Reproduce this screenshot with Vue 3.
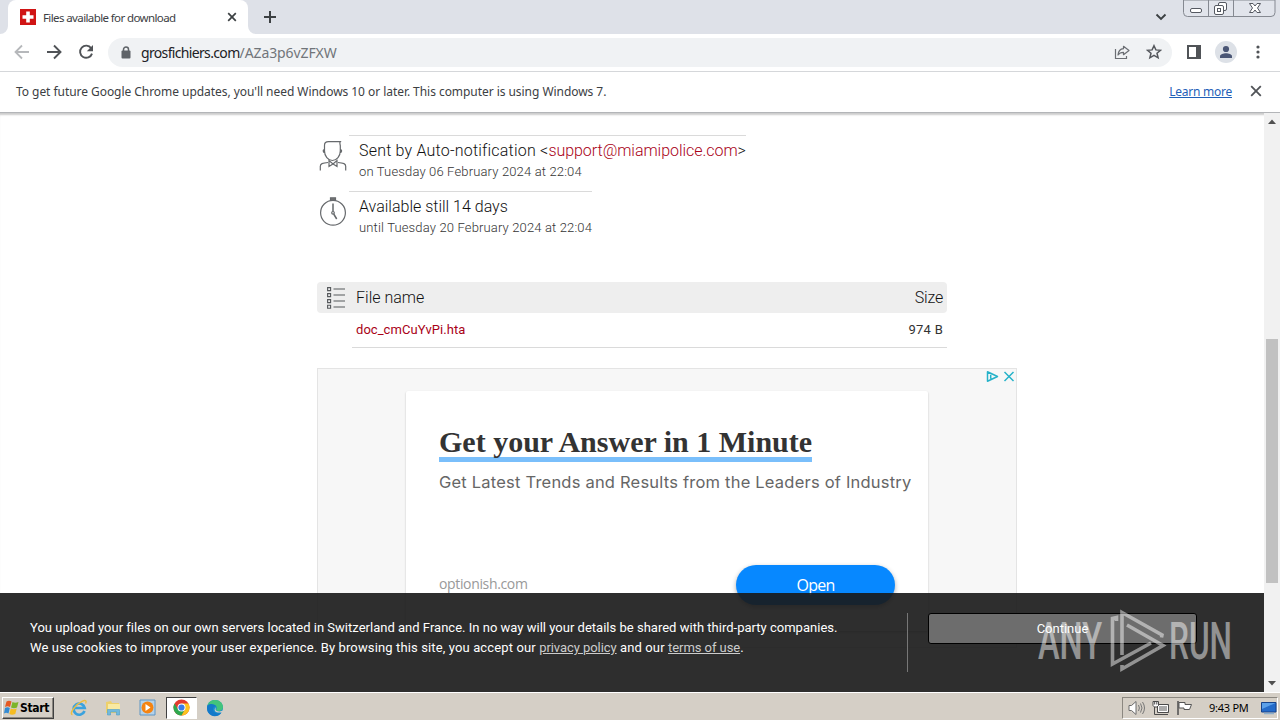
<script setup>
const files = [{ name: 'doc_cmCuYvPi.hta', size: '974 B' }]
</script>

<template>
  <div class="screen">
    <header class="tabs">
      <div class="tab">
        <svg class="favicon" width="16" height="16" viewBox="0 0 16 16"><path fill="#d01414" d="M0 0h16v16H0z" /><path fill="#fff" d="M6.200 2.500h3.600v3.700H13.500v3.600H9.800v3.700H6.200V9.800H2.500V6.200h3.700z" /></svg>
        <span class="tab-title">Files available for download</span>
        <svg class="tab-x" width="10" height="10" viewBox="0 0 10 10"><path d="M1.200 1.200l7.600 7.600M8.800 1.200L1.200 8.800" stroke="#3c4043" stroke-width="1.700" /></svg>
        <svg class="flare left" width="8" height="8" viewBox="0 0 8 8"><path fill="#fff" d="M8 0v8H0a8 8 0 0 0 8-8z" /></svg>
        <svg class="flare right" width="8" height="8" viewBox="0 0 8 8"><path fill="#fff" d="M0 0v8h8a8 8 0 0 1-8-8z" /></svg>
      </div>
      <svg class="plus" width="14" height="14" viewBox="0 0 14 14"><path d="M7 1v12M1 7h12" stroke="#3c4043" stroke-width="2" /></svg>
      <svg class="chev" width="12" height="8" viewBox="0 0 12 8"><path d="M1.500 1.500L6 6l4.500-4.500" fill="none" stroke="#3c4043" stroke-width="1.900" /></svg>
      <svg class="winctl" width="94" height="18" viewBox="0 0 94 18">
        <path d="M.5 0v12.500a4 4 0 0 0 4 4h83.500a4 4 0 0 0 4-4V0z" fill="#e1e4eb" stroke="#858991" />
        <path d="M25.500 0v16M50.500 0v16" stroke="#858991" />
        <g fill="#fff" stroke="#555961"><rect x="7.500" y="8.500" width="11" height="4" rx="1.500" /><rect x="35.500" y="2.500" width="8" height="8" rx="1.500" /><rect x="31.500" y="5.500" width="9" height="9" rx="1.500" /><rect x="34.500" y="8.500" width="3" height="3" /></g>
        <path d="M66.500 3.500h3.500l2 2.500 2-2.500h3.500l-3 4.500 3 4.500H74l-2-2.500-2 2.500h-3.500l3-4.500z" fill="#fff" stroke="#555961" />
      </svg>
    </header>

    <div class="toolbar">
      <svg width="16" height="16" viewBox="0 0 16 16"><path d="M15 8H2M8 1.500L1.500 8 8 14.500" fill="none" stroke="#b6b8bb" stroke-width="1.800" /></svg>
      <svg width="16" height="16" viewBox="0 0 16 16"><path d="M1 8h13M8 1.500L14.500 8 8 14.500" fill="none" stroke="#505357" stroke-width="1.900" /></svg>
      <svg width="16" height="16" viewBox="0 0 16 16"><path d="M13.200 4.200A6.100 6.100 0 1 0 14 9.600" fill="none" stroke="#505357" stroke-width="1.900" /><path d="M15 1v6.200H8.800z" fill="#505357" /></svg>
      <div class="omnibox">
        <svg class="lock" width="10" height="13" viewBox="0 0 10 13"><path d="M2.500 5V3.500a2.500 2.500 0 0 1 5 0V5" fill="none" stroke="#5f6368" stroke-width="1.500" /><rect x=".5" y="4.500" width="9" height="8" rx="1" fill="#5f6368" /></svg>
        <span class="url"><b>grosfichiers.com</b><i>/AZa3p6vZFXW</i></span>
        <svg class="share" width="17" height="15" viewBox="0 0 17 15"><path d="M1.500 4v9.500h11V11" fill="none" stroke="#6b6e73" stroke-width="1.200" /><path d="M9.500 1.300L15 5.500 9.500 9.700V7.300C7 7.300 5.300 8 4 10c.3-3.600 2.300-6 5.500-6.300z" fill="none" stroke="#6b6e73" stroke-width="1.200" stroke-linejoin="round" /></svg>
        <svg class="star" width="16" height="16" viewBox="0 0 16 16"><path d="M8 1.700l1.900 4.200 4.600.4-3.500 3 1.100 4.500L8 11.400l-4.100 2.400L5 9.300l-3.500-3 4.600-.4z" fill="none" stroke="#54575c" stroke-width="1.500" /></svg>
      </div>
      <svg class="panel" width="14" height="14" viewBox="0 0 14 14"><path fill="#505357" fill-rule="evenodd" d="M0 0h14v14H0zM2 2v10h7V2z" /></svg>
      <svg class="avatar" width="22" height="22" viewBox="0 0 22 22"><circle cx="11" cy="11" r="11" fill="#dde1e7" /><circle cx="11" cy="8" r="3.100" fill="#4a5675" /><path d="M5 17v-1.800c0-2 3.500-3 6-3s6 1 6 3V17z" fill="#4a5675" /></svg>
      <svg class="dots" width="4" height="14" viewBox="0 0 4 14"><g fill="#505357"><circle cx="2" cy="2" r="1.600" /><circle cx="2" cy="7" r="1.600" /><circle cx="2" cy="12" r="1.600" /></g></svg>
    </div>

    <div class="infobar">
      <span class="info-text">To get future Google Chrome updates, you'll need Windows 10 or later. This computer is using Windows 7.</span>
      <a class="learn">Learn more</a>
      <svg width="12" height="12" viewBox="0 0 12 12"><path d="M1.200 1.200l9.600 9.600M10.800 1.200l-9.600 9.600" stroke="#505357" stroke-width="1.800" /></svg>
    </div>

    <div class="view">
      <main class="page">
        <section class="meta">
          <svg class="meta-icon" width="28" height="32" viewBox="0 0 28 32"><g fill="none" stroke="#66696c" stroke-width="1.200"><path d="M5.500 11V5.200C5.500 2.500 7 1.600 9.500 1.600h11.800c-1 1.200-.3 2.600 0 4V11c0 5-3.500 9.500-7.900 9.500S5.500 16 5.500 11zM5.500 9.500c-2 0-1.500 3 .5 3.500M21.300 9.500c2 0 1.500 3-.5 3.500" /><path d="M1.300 30.500v-4.300c0-2.500 2-3.200 7.700-3.700M26.700 30.500v-4.300c0-2.500-2-3.200-7.700-3.700M10 20.500v6l4-2.500 4 2.500v-6l-4 3.500z" /></g></svg>
          <div class="meta-text first">
            <p class="big sent">Sent by Auto-notification &lt;<a>support@miamipolice.com</a>&gt;</p>
            <p class="small sent-on">on Tuesday 06 February 2024 at 22:04</p>
          </div>
        </section>
        <section class="meta">
          <svg class="meta-icon" width="28" height="32" viewBox="0 0 28 32"><g fill="none" stroke="#66696c" stroke-width="1.200"><circle cx="14" cy="16.800" r="12.400" /><path d="M14 7.500v8M14.700 18l3 5" stroke-width="1.500" /><circle cx="14" cy="16.800" r="1.300" /><path d="M11.500 1.800h5v2.200h-5z" fill="#777" /></g></svg>
          <div class="meta-text second">
            <p class="big avail">Available still 14 days</p>
            <p class="small until">until Tuesday 20 February 2024 at 22:04</p>
          </div>
        </section>

        <section class="files">
          <div class="file-head">
            <svg width="18" height="23" viewBox="0 0 18 23"><g fill="none" stroke="#55585b" stroke-width="1.100"><path d="M.6 1.600h3v3h-3zM.6 7.600h3v3h-3zM.6 13.600h3v3h-3zM.6 19.200h3v3h-3zM6.500 3H18M6.500 9H18M6.500 15H18M6.500 21H18" /></g></svg>
            <span class="h-name">File name</span><span class="h-size">Size</span>
          </div>
          <div v-for="f in files" :key="f.name" class="file-row"><a>{{ f.name }}</a><span>{{ f.size }}</span></div>
        </section>

        <section class="ad">
          <svg class="adchoices" width="30" height="13" viewBox="0 0 30 13"><path d="M2.500 1.800v9.400L12.500 6.500zM5.700 4.800v4" fill="none" stroke="#26b2c9" stroke-width="1.500" stroke-linejoin="round" /><path d="M19.500 2l9 9M28.500 2l-9 9" stroke="#26b2c9" stroke-width="1.500" /></svg>
          <div class="card">
            <h2>Get your Answer in 1 Minute</h2>
            <p class="sub">Get Latest Trends and Results from the Leaders of Industry</p>
            <div class="card-foot"><span class="site">optionish.com</span><button class="open"><span>Open</span></button></div>
          </div>
        </section>
      </main>

      <aside class="scroll">
        <svg width="8" height="5" viewBox="0 0 8 5"><path fill="#505050" d="M0 5l4-4.500L8 5z" /></svg>
        <div class="thumb"></div>
        <svg width="8" height="5" viewBox="0 0 8 5"><path fill="#505050" d="M0 0l4 4.500L8 0z" /></svg>
      </aside>

      <div class="cookies">
        <div class="cookie-text">
          <p class="c1">You upload your files on our own servers located in Switzerland and France. In no way will your details be shared with third-party companies.</p>
          <p class="c2">We use cookies to improve your user experience. By browsing this site, you accept our <u>privacy policy</u> and our <u>terms of use</u>.</p>
        </div>
        <div class="rule"></div>
        <button class="continue">Continue</button>
      </div>
    </div>

    <svg class="watermark" width="245" height="70" viewBox="1035 605 245 70">
      <g class="wm-text"><text x="1038" y="659" textLength="64" lengthAdjust="spacingAndGlyphs">ANY</text><text x="1169" y="659" textLength="63" lengthAdjust="spacingAndGlyphs">RUN</text></g>
      <path d="M1116.500 621v-3.500l-4 1V664l38.500-21M1122 655V612.500l40 22.500-.5 2.500M1127 625l36 20.500-41 23.500v-4" fill="none" stroke="#fff" stroke-width="3.600" />
    </svg>

    <footer class="taskbar">
      <div class="start">
        <svg width="15" height="15" viewBox="0 0 15 15"><path fill="#e65a24" d="M2.500 1.500Q5 0 7.500 1.500L6 7Q3.500 5.500 1 7z" /><path fill="#7cb52a" d="M8.500 2Q11 3.500 14.500 2L13 7.500Q10 9 7 7.500z" /><path fill="#348bd3" d="M1 8Q3.500 6.500 5.800 8L4.500 13.500Q2 12 0 13.500z" /><path fill="#f5bc22" d="M6.800 8.500Q9.500 10 12.700 8.500L11.300 14Q8 15.500 5.300 14z" /></svg>
        <b>Start</b>
      </div>
      <svg class="t-ie" width="18" height="18" viewBox="0 0 18 18"><path d="M14.500 12A5.600 5.600 0 1 1 14.700 9H5" fill="none" stroke="#3ba2dd" stroke-width="2.700" /><path d="M2.500 15.500C-1.500 15 6 5 12 2.300c4-1.800 4.800-.3 3.600 2.200" fill="none" stroke="#edbd3e" stroke-width="1.400" /></svg>
      <svg class="t-folder" width="18" height="18" viewBox="0 0 18 18"><path d="M2 3l5-1 1 2h7v10H2z" fill="#edd06b" /><path d="M4 5h12v7H4z" fill="#f8e9a2" /><path d="M3.500 16v-5.500h12V16h-3v-3h-6v3z" fill="#72b9dc" stroke="#4d9dc7" stroke-width=".6" /></svg>
      <svg class="t-media" width="17" height="17" viewBox="0 0 17 17"><path d="M1 1h15v15H1z" fill="#b5d2e9" stroke="#5e96c4" /><circle cx="8.500" cy="8.500" r="6" fill="#f58412" /><path d="M6.500 5v7l5-3.500z" fill="#fff" /></svg>
      <div class="active">
        <svg width="17" height="17" viewBox="0 0 17 17"><circle cx="8.500" cy="8.500" r="8" fill="#e33b2e" /><path fill="#2da94f" d="M1.570 4.500A8 8 0 0 0 8.500 16.500L12 10.500 5 10.500z" /><path fill="#fcc31e" d="M8.500 16.500A8 8 0 0 0 15.430 4.500H8.500L12 10.500z" /><circle cx="8.500" cy="8.500" r="4" fill="#fff" /><circle cx="8.500" cy="8.500" r="3.100" fill="#397de8" /></svg>
      </div>
      <svg class="t-edge" width="18" height="18" viewBox="0 0 18 18"><circle cx="9" cy="9" r="8" fill="#168bd0" /><path d="M1.300 7C2.500 2.500 6 1 9 1c5 0 8 3.500 8 7 0 2.500-2 4-4.500 4-2 0-2.800-1-2-2 .8-1.500 0-3.500-2.500-4C5 5.500 2.500 6 1.300 7z" fill="#43c47c" /><path d="M1.200 7C3 4 9 4.500 10.500 7.500 9 6.500 6.500 8 7 11c.4 3 4 4.500 8 3-3 4.500-10 4-12.500 0C1 12 .8 9 1.200 7z" fill="#1479c9" /><path d="M10.200 8.300c-1.500 1.500-.7 4.300 3.300 4.200l3.500-1 .5 2h-5c-4 .5-5-4-2.300-5.200z" fill="#d5cfc6" /></svg>
      <div class="tray">
        <svg width="18" height="16" viewBox="0 0 18 16"><path d="M1 5.500h2.500L8 1.500v13L3.500 10.500H1z" fill="#fff" stroke="#6b6b6b" /><path d="M10.500 5q1.800 3 0 6M12.500 3.500q3 4.500 0 9M14.500 2q4 6 0 12" fill="none" stroke="#777" /></svg>
        <svg width="18" height="16" viewBox="0 0 18 16"><path d="M5.500 4.500h11v8h-11z" fill="#aaa" stroke="#4b4b4b" /><path d="M6.500 5.500h9v6h-9z" fill="none" stroke="#fff" /><path d="M7 14.500h9M2.500 7v7.500H7" fill="none" stroke="#4b4b4b" /><path d="M1 1.500h5.500v4l-1.500 1.500h-2.500L1 5.500zM2.700 1.500v3M4.800 1.500v3" fill="#fff" stroke="#4b4b4b" /></svg>
        <svg width="17" height="16" viewBox="0 0 17 16"><path d="M2 1v14" stroke="#555" stroke-width="1.600" /><path d="M3 2.500h6v2h6.500l-2 5H8V8H3z" fill="#fff" stroke="#555" /></svg>
        <span class="clock">9:43 PM</span>
        <svg class="desk" width="16" height="14" viewBox="0 0 16 14"><path d="M.5 1.500h14.500v9.500H.5z" fill="#246bc9" stroke="#16438b" /><path d="M1 2h13.500L1 8z" fill="#5ba0e9" /><path d="M3 12.500h10" stroke="#8badcb" stroke-width="1.500" /></svg>
      </div>
    </footer>
  </div>
</template>

<style>
body { margin: 0; overflow: hidden; }
</style>

<style scoped>
* { box-sizing: border-box; }
.screen { position: relative; display: flex; flex-direction: column; width: 1280px; height: 720px; overflow: hidden; background: #fff; font-family: "Noto Sans", sans-serif; white-space: nowrap; }
p, h2 { margin: 0; font-weight: 400; }
svg { display: block; flex: none; }
button { padding: 0; font: inherit; }

.tabs { display: flex; height: 34px; background: #dee1e8; padding-left: 8px; }
.tab { position: relative; display: flex; align-items: center; width: 240px; height: 34px; padding: 0 11px; background: #fff; border-radius: 8px 8px 0 0; }
.favicon { margin-left: 1px; }
.tab-title { margin-left: 7px; font-size: 11.500px; letter-spacing: -0.610px; color: #3c4043; }
.tab-x { margin-left: auto; }
.flare { position: absolute; bottom: 0; }
.left { left: -8px; }
.right { right: -8px; }
.plus { margin: 10px 0 0 15px; }
.chev { margin: 13px 0 0 auto; }
.winctl { margin: 0 3px 0 16px; }

.toolbar { display: flex; align-items: center; gap: 16px; height: 38px; padding: 0 20px 1px 14px; border-bottom: 1px solid #d5d7da; }
.omnibox { flex: 1; display: flex; align-items: center; height: 29px; margin-left: -2px; padding: 0 10px 0 13px; background: #f0f2f4; border-radius: 15px; }
.url { margin-left: 10px; font-size: 14px; color: #70757a; }
.url b { font-weight: 400; color: #202124; letter-spacing: -0.660px; }
.url i { font-style: normal; letter-spacing: -0.100px; }
.share { margin-left: auto; }
.star { margin-left: 15px; }
.panel { margin-left: -1px; }
.avatar { margin-left: -2px; }
.dots { margin-left: 3px; }

.infobar { display: flex; align-items: center; height: 41px; padding: 0 18px 2px 16px; font-size: 12px; color: #3c4043; border-bottom: 1px solid #b3b5b8; }
.info-text { letter-spacing: -0.050px; }
.learn { margin-left: auto; margin-right: 18px; color: #1f5fb8; text-decoration: underline; letter-spacing: -0.250px; }

.view { position: relative; display: flex; height: 579px; overflow: hidden; box-shadow: inset 0 3px 2px -1px #ccc; font-family: Roboto, sans-serif; }
.page { flex: 1; padding: 22px 0 0 317px; }
.meta { display: flex; height: 56px; }
.meta-icon { margin: 5px 1px 0 2px; }
.meta-text { margin-left: 1px; padding: 4px 0 0 10px; border-top: 1px solid #dadada; height: 50px; }
.first { width: 397px; }
.second { width: 243px; }
.big { font-size: 16px; line-height: 22px; font-weight: 300; color: #111; }
.small { font-size: 13px; line-height: 20px; font-weight: 300; color: #333; }
.big a, .file-row a { color: #a90218; }
.sent { letter-spacing: 0.200px; }
.sent a { letter-spacing: -0.040px; }
.sent-on, .until { letter-spacing: 0.150px; }
.avail { letter-spacing: 0; }

.files { width: 630px; margin-top: 35px; }
.file-head { display: flex; align-items: center; height: 31px; padding: 0 4px 0 10px; background: #eee; border-radius: 4px; font-size: 16px; font-weight: 300; color: #111; }
.h-name { margin-left: 11px; letter-spacing: 0.020px; }
.h-size { margin-left: auto; letter-spacing: -0.200px; }
.file-row { display: flex; justify-content: space-between; height: 35px; line-height: 33px; margin-left: 35px; padding: 0 4px; border-bottom: 1px solid #dadada; font-size: 13px; color: #333; letter-spacing: 0.050px; }
.file-row span { letter-spacing: 0.250px; }

.ad { position: relative; width: 700px; height: 280px; margin-top: 20px; padding: 22px 0 0 88px; background: #f7f7f7; border: 1px solid #e4e4e4; }
.adchoices { position: absolute; top: 1px; right: 1px; }
.card { width: 522px; height: 240px; padding: 32px 16px 0 33px; background: #fff; border-radius: 2px; box-shadow: 0 1px 2px #bbb; }
h2 { width: 373px; height: 39px; border-bottom: 5px solid #7abffb; font: bold 30px/38px "Liberation Serif", serif; color: #333; letter-spacing: 0; }
.sub { margin-top: 8px; font: 16.500px/24px Inter, sans-serif; color: #666; letter-spacing: 0.210px; }
.card-foot { display: flex; justify-content: space-between; margin-top: 71px; padding-right: 17px; }
.site { margin-top: 7px; font: 14px/24px "Open Sans", sans-serif; color: #999; letter-spacing: -0.350px; }
.open { width: 159px; height: 40px; border: 0; border-radius: 20px; background: #0788ff; color: #fff; box-shadow: 0 2px 5px #0005; font: 16px/40px "Open Sans", sans-serif; letter-spacing: -0.800px; }

.scroll { display: flex; flex-direction: column; align-items: center; width: 16px; padding: 6px 0 6px; background: #f1f1f1; }
.thumb { width: 12px; height: 244px; margin: 215px 0 auto; background: #c1c1c1; }

.cookies { position: absolute; left: 0; top: 480px; display: flex; width: 1264px; height: 99px; padding: 20px 66px 0 30px; background: #191919e8; color: #fff; font-size: 13px; line-height: 20px; }
.cookie-text { width: 877px; flex: none; padding-top: 5px; }
.rule { width: 1px; height: 59px; background: #777; }
.continue { width: 269px; height: 31px; margin-left: 20px; background: #6d6d6d; color: #fff; border: 1px solid #000; border-radius: 3px; }
.c1 { letter-spacing: 0.012px; }
.c2 { letter-spacing: 0.130px; }
u { color: #ccc; letter-spacing: -0.060px; }

.watermark { position: absolute; left: 1035px; top: 605px; opacity: 0.480; }
.wm-text { font-family: Roboto, sans-serif; font-size: 52px; font-weight: 500; fill: #fff; }

.taskbar { display: flex; align-items: center; height: 28px; padding: 2px 2px 0 2px; background: #d5cfc6; border-top: 1px solid #fff; }
.start { display: flex; align-items: center; width: 52px; height: 22px; padding-left: 1px; border: 1px solid; border-color: #fff #404040 #404040 #fff; box-shadow: inset -1px -1px #8b8780; }
.start b { font: bold 12px "DejaVu Sans Condensed", "DejaVu Sans", sans-serif; color: #000; letter-spacing: -0.350px; margin-left: 1px; }
.t-ie { margin-left: 16px; }
.t-folder { margin-left: 16px; }
.t-media { margin-left: 17px; }
.active { display: flex; align-items: center; justify-content: center; width: 31px; height: 22px; margin-left: 10px; background: #fff; border: 1px solid; border-color: #404040 #fff #fff #404040; }
.t-edge { margin-left: 9px; }
.tray { display: flex; align-items: center; width: 156px; height: 22px; margin-left: auto; padding-left: 5px; border: 1px solid; border-color: #8b8780 #fff #fff #8b8780; }
.tray svg { margin-right: 6px; }
.clock { margin-left: 10px; font-size: 11px; color: #000; letter-spacing: -0.250px; }
.tray .desk { margin: 0 0 0 auto; }
</style>
